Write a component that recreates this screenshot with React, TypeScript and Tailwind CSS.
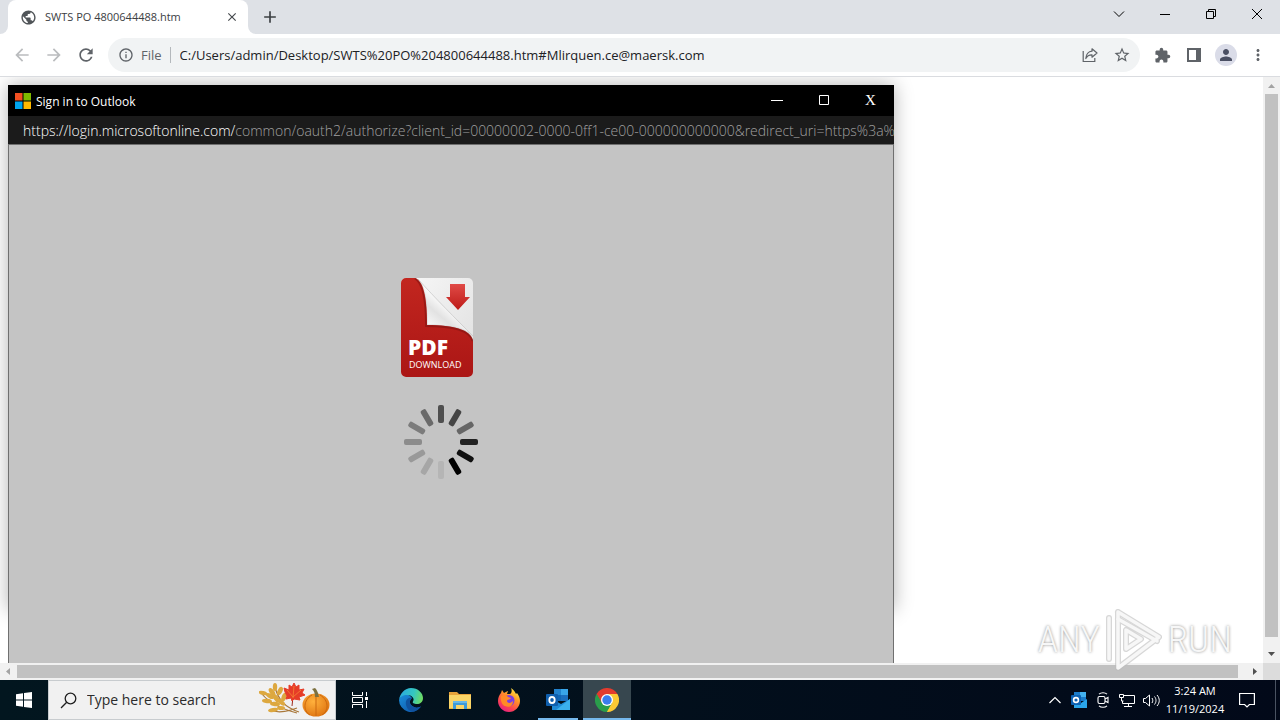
import type { ReactNode } from "react";
import {
  MdAdd,
  MdArrowBack,
  MdArrowForward,
  MdClose,
  MdExtension,
  MdInfoOutline,
  MdMoreVert,
  MdPerson,
  MdPublic,
  MdRefresh,
  MdStarBorder,
} from "react-icons/md";

function WindowButton({ label, children }: { label: string; children: ReactNode }) {
  return (
    <button aria-label={label} className="flex h-7 w-[46px] items-center justify-center text-black">
      {children}
    </button>
  );
}

function TabStrip() {
  return (
    <div className="flex h-[34px] flex-none bg-[#dee1e6]">
      <div className="flex w-2 items-end bg-white">
        <div className="h-full w-2 rounded-br-lg bg-[#dee1e6]" />
      </div>
      <div className="flex w-60 items-center rounded-t-lg bg-white pr-2 pl-3">
        <MdPublic className="size-[17px] flex-none text-[#505458]" />
        <span className="ml-2 flex-1 text-[11px] whitespace-nowrap text-[#3c4043]">SWTS PO 4800644488.htm</span>
        <button aria-label="Close tab" className="flex size-4 items-center justify-center text-[#45494d]">
          <MdClose className="size-[14px]" />
        </button>
      </div>
      <div className="flex w-2 items-end bg-white">
        <div className="h-full w-2 rounded-bl-lg bg-[#dee1e6]" />
      </div>
      <button aria-label="New tab" className="flex w-7 items-center justify-center text-[#3c4043]">
        <MdAdd className="size-5" />
      </button>
      <div className="ml-auto flex">
        <WindowButton label="Search tabs">
          <svg className="size-3" viewBox="0 0 12 12" fill="none" stroke="currentColor">
            <path d="M1 3.5l5 5 5-5" />
          </svg>
        </WindowButton>
        <WindowButton label="Minimize">
          <svg className="size-3" viewBox="0 0 12 12" stroke="currentColor">
            <path d="M1 6.5h10" />
          </svg>
        </WindowButton>
        <WindowButton label="Restore">
          <svg className="size-3" viewBox="0 0 12 12" fill="none" stroke="currentColor">
            <path d="M1.5 3.5h7v7h-7zM3.5 3.5v-2h7v7h-2" />
          </svg>
        </WindowButton>
        <WindowButton label="Close">
          <svg className="size-3" viewBox="0 0 12 12" fill="none" stroke="currentColor">
            <path d="M1 1l10 10M11 1L1 11" />
          </svg>
        </WindowButton>
      </div>
    </div>
  );
}

function ToolButton({ label, children }: { label: string; children: ReactNode }) {
  return (
    <button aria-label={label} className="flex size-8 flex-none items-center justify-center text-[#5f6368]">
      {children}
    </button>
  );
}

function Toolbar() {
  return (
    <div className="flex h-[43px] flex-none items-center border-b border-[#dadce0] bg-white px-[6px]">
      <ToolButton label="Back">
        <MdArrowBack className="size-5 text-[#babcbe]" />
      </ToolButton>
      <ToolButton label="Forward">
        <MdArrowForward className="size-5 text-[#babcbe]" />
      </ToolButton>
      <ToolButton label="Reload">
        <MdRefresh className="size-5" />
      </ToolButton>
      <div className="ml-[6px] flex h-[34px] flex-1 items-center rounded-full bg-[#f1f3f4] pr-[2px] pl-[10px]">
        <MdInfoOutline className="size-4 flex-none text-[#5f6368]" />
        <label htmlFor="address" className="ml-[7px] text-[13px] leading-5 text-[#5f6368]">
          File
        </label>
        <div className="ml-2 h-4 w-px flex-none bg-[#b4b8bc]" />
        <input
          id="address"
          className="ml-[9px] min-w-0 flex-1 bg-transparent text-[13px] leading-5 text-[#202124] outline-none"
          defaultValue="C:/Users/admin/Desktop/SWTS%20PO%204800644488.htm#Mlirquen.ce@maersk.com"
        />
        <ToolButton label="Share this page">
          <svg className="size-4" viewBox="0 0 16 16" fill="none" stroke="currentColor" strokeWidth="1.2">
            <path d="M1.2 4v10.5h11.6V11" />
            <path d="M10 1.8l5 4.2-5 4.2V7.8C7 7.700 5 9 3.800 11.500 4 7.500 6.500 4.500 10 4.200z" strokeLinejoin="round" />
          </svg>
        </ToolButton>
        <ToolButton label="Bookmark this tab">
          <MdStarBorder className="size-[18px]" />
        </ToolButton>
      </div>
      <div className="ml-[6px] flex">
        <ToolButton label="Extensions">
          <MdExtension className="size-[17px]" />
        </ToolButton>
        <ToolButton label="Side panel">
          <svg className="size-[14px]" viewBox="0 0 14 14">
            <path fill="currentColor" fillRule="evenodd" d="M0 0h14v14H0zM2 2v10h7V2z" />
          </svg>
        </ToolButton>
        <ToolButton label="Profile">
          <span className="flex size-[22px] items-center justify-center rounded-full bg-[#dadce8]">
            <MdPerson className="size-[18px] text-[#4a4f63]" />
          </span>
        </ToolButton>
        <ToolButton label="Menu">
          <MdMoreVert className="size-[18px]" />
        </ToolButton>
      </div>
    </div>
  );
}

function PdfIcon() {
  return (
    <svg className="h-[99px] w-[72px] flex-none" viewBox="0 0 72 99" role="img" aria-label="PDF download">
      <defs>
        <linearGradient id="pdfRed" x1="0" y1="0" x2="0" y2="1">
          <stop offset="0" stopColor="#c2261f" />
          <stop offset="1" stopColor="#ab1615" />
        </linearGradient>
        <linearGradient id="pdfSheet" x1="0" y1="0" x2="1" y2="1">
          <stop offset="0" stopColor="#f8f8f8" />
          <stop offset="1" stopColor="#dedede" />
        </linearGradient>
        <linearGradient id="pdfCurl" x1="0.150" y1="0.900" x2="0.600" y2="0.350">
          <stop offset="0" stopColor="#ffffff" />
          <stop offset="0.500" stopColor="#e2e2e2" />
          <stop offset="0.800" stopColor="#fafafa" />
          <stop offset="1" stopColor="#b4b4b4" />
        </linearGradient>
        <linearGradient id="pdfArrow" x1="0" y1="0" x2="0" y2="1">
          <stop offset="0" stopColor="#e04a46" />
          <stop offset="1" stopColor="#bd1b18" />
        </linearGradient>
      </defs>
      <rect width="72" height="99" rx="5" fill="url(#pdfSheet)" />
      <path d="M17 1c7 8 9 22 9 46 22 0 38 3 46 11C56 42 33 19 17 1z" fill="url(#pdfCurl)" stroke="#c9c9c9" strokeWidth="0.800" />
      <path d="M0 5a5 5 0 0 1 5-5h9c8 3 12 17 12 47 28 0 44 5 46 16v31a5 5 0 0 1-5 5H5a5 5 0 0 1-5-5z" fill="url(#pdfRed)" />
      <path d="M14 .5c7 4 11 18 11 47.500 27 0 44 5 46.500 15" fill="none" stroke="#861512" strokeWidth="1.800" opacity="0.650" />
      <path d="M49 6h15v13h5L57 32 45 19h4z" fill="url(#pdfArrow)" />
      <text x="7" y="77" fontFamily="Open Sans, sans-serif" fontWeight="800" fontSize="21" fill="white">
        PDF
      </text>
      <text x="8" y="90" fontFamily="Open Sans, sans-serif" fontSize="9" fill="white">
        DOWNLOAD
      </text>
    </svg>
  );
}

const SPOKES = [
  "#4f4f4f", "#454545", "#666666", "#222222", "#101010", "#000000",
  "#b5b5b5", "#a6a6a6", "#999999", "#8c8c8c", "#7c7c7c", "#6a6a6a",
];

function Spinner() {
  return (
    <svg className="size-20 flex-none" viewBox="-40 -40 80 80" role="img" aria-label="Loading">
      {SPOKES.map((color, i) => (
        <rect key={i} x="-3" y="-37" width="6" height="18" rx="2" fill={color} transform={`rotate(${i * 30})`} />
      ))}
    </svg>
  );
}

function SignInWindow() {
  return (
    <section className="ml-2 h-[525px] w-[886px] flex-none shadow-[0_0_18px_rgba(0,0,0,0.3)]">
      <header className="flex h-[31px] items-center bg-black pl-[7px] text-white">
        <svg className="size-4" viewBox="0 0 16 16">
          <path fill="#f25022" d="M0 0h7.500v7.500H0z" />
          <path fill="#7fba00" d="M8.500 0H16v7.500H8.500z" />
          <path fill="#00a4ef" d="M0 8.500h7.500V16H0z" />
          <path fill="#ffb900" d="M8.500 8.500H16V16H8.500z" />
        </svg>
        <h1 className="ml-[5px] pt-[3px] text-xs leading-5">Sign in to Outlook</h1>
        <div className="ml-auto flex self-start">
          <button aria-label="Minimize window" className="flex h-[30px] w-[47px] items-center justify-center">
            <svg className="size-3" viewBox="0 0 12 12" stroke="white">
              <path d="M0 6.500h12" />
            </svg>
          </button>
          <button aria-label="Maximize window" className="flex h-[30px] w-[47px] items-center justify-center">
            <svg className="size-3" viewBox="0 0 12 12" stroke="white" fill="none">
              <path d="M1.500 1.500h9v9h-9z" />
            </svg>
          </button>
          <button
            aria-label="Close window"
            className="h-[30px] w-[47px] font-['Liberation_Serif',serif] text-[15px] leading-[30px]"
          >
            X
          </button>
        </div>
      </header>
      <div className="h-7 overflow-hidden bg-[#1b1b1b] pl-[15px] text-sm leading-[30px] font-light whitespace-nowrap text-[#a0a0a0]">
        <span className="text-white">https://login.microsoftonline.com/</span>
        common/oauth2/authorize?client_id=00000002-0000-0ff1-ce00-000000000000&amp;redirect_uri=https%3a%2f%2foutlook.office.com
      </div>
      <div className="flex h-[600px] flex-col gap-[25px] border border-[#707070] bg-[#c4c4c4] pt-[133px] pl-[392px]">
        <PdfIcon />
        <Spinner />
      </div>
    </section>
  );
}

function Watermark() {
  return (
    <div className="absolute right-12 bottom-12 flex items-center gap-1 font-['Roboto_Condensed','Liberation_Sans',sans-serif] text-[37px] leading-[64px] font-light text-[#f7f7f7] [text-shadow:0_0_3px_#888]">
      <span>ANY</span>
      <svg className="h-16 w-[60px]" viewBox="0 0 60 64" fill="none" strokeLinejoin="round" strokeLinecap="round">
        <g stroke="#bdbdbd" strokeWidth="6" opacity="0.600">
          <path d="M14 4l41 25-41 31V4" />
          <path d="M5 10v41M14 11l39 22M22 22v19l15-10z" />
        </g>
        <g stroke="#f7f7f7" strokeWidth="3.500">
          <path d="M14 4l41 25-41 31V4" />
          <path d="M5 10v41M14 11l39 22M22 22v19l15-10z" />
        </g>
      </svg>
      <span>RUN</span>
    </div>
  );
}

function Viewport() {
  return (
    <main className="flex min-h-0 flex-1 flex-col bg-white">
      <div className="flex min-h-0 flex-1">
        <div className="min-w-0 flex-1 overflow-hidden pt-2">
          <SignInWindow />
        </div>
        <div className="flex w-[17px] flex-col items-center bg-[#f1f1f1]">
          <svg className="size-[17px] flex-none" viewBox="0 0 17 17">
            <path d="M5 11l3.500-4 3.500 4z" fill="#a3a3a3" />
          </svg>
          <div className="w-[13px] flex-1 bg-[#c1c1c1]" />
          <div className="h-[9px]" />
          <svg className="size-[17px] flex-none" viewBox="0 0 17 17">
            <path d="M5 6l3.500 4L12 6z" fill="#505050" />
          </svg>
        </div>
      </div>
      <div className="flex h-[17px] flex-none items-center bg-[#f1f1f1]">
        <svg className="size-[17px]" viewBox="0 0 17 17">
          <path d="M10 5L6 8.500l4 3.500z" fill="#a3a3a3" />
        </svg>
        <div className="h-[13px] flex-1 bg-[#c1c1c1]" />
        <div className="w-2" />
        <svg className="size-[17px]" viewBox="0 0 17 17">
          <path d="M7 5l4 3.500L7 12z" fill="#505050" />
        </svg>
        <div className="h-full w-[17px] bg-[#dcdcdc]" />
      </div>
    </main>
  );
}

function HarvestArt() {
  return (
    <svg className="h-9 w-[72px] flex-none" viewBox="0 0 72 36">
      <defs>
        <radialGradient id="pumpkin" cx="0.400" cy="0.350" r="0.700">
          <stop offset="0" stopColor="#ffb13d" />
          <stop offset="1" stopColor="#df7410" />
        </radialGradient>
      </defs>
      <g stroke="#a9783a" strokeWidth="1.200" fill="none">
        <path d="M16 5c3 12 9 20 24 25M3 12c8 10 20 15 35 19M14 29c8 2 15 0 24-3" />
      </g>
      <g fill="#dda83f">
        <ellipse cx="16" cy="5" rx="2.200" ry="4" />
        <ellipse cx="13" cy="10" rx="2.400" ry="4.500" transform="rotate(-35 13 10)" />
        <ellipse cx="21" cy="9" rx="2.400" ry="4.500" transform="rotate(25 21 9)" />
        <ellipse cx="17" cy="16" rx="2.400" ry="4.500" transform="rotate(-35 17 16)" />
        <ellipse cx="25" cy="15" rx="2.400" ry="4.500" transform="rotate(20 25 15)" />
        <ellipse cx="4" cy="11" rx="4.500" ry="2" transform="rotate(15 4 11)" />
        <ellipse cx="11" cy="14" rx="4.500" ry="2.200" transform="rotate(30 11 14)" />
        <ellipse cx="8" cy="19" rx="5" ry="2.200" transform="rotate(5 8 19)" />
        <ellipse cx="16" cy="22" rx="5" ry="2.200" transform="rotate(5 16 22)" />
        <ellipse cx="22" cy="20" rx="5" ry="2.200" transform="rotate(40 22 20)" />
        <ellipse cx="14" cy="28" rx="5" ry="2" transform="rotate(-10 14 28)" />
        <ellipse cx="22" cy="26" rx="4" ry="2" />
      </g>
      <path d="M34 15l-1 9" stroke="#9c2d20" strokeWidth="1" />
      <path
        d="M35 1l2 4 3-2v5l5-1-2 4 3 2-6 2 1 3-6-1-2 2-1-3-5 1 1-3-2-4-1-4 5 2V3l3 2z"
        fill="#e63c28"
        stroke="#e63c28"
        strokeWidth="1"
        strokeLinejoin="round"
      />
      <path d="M35 4l-1 12M42 8l-8 7M28 8l6 7" stroke="#f58434" strokeWidth="0.800" />
      <ellipse cx="57" cy="23" rx="13.500" ry="11.500" fill="url(#pumpkin)" />
      <g fill="none" stroke="#cc680e" strokeWidth="1">
        <path d="M53 13c-9 5-9 16-2 20M57 13v21M61 13c9 5 9 16 2 20" />
      </g>
      <path d="M56 15c0-4-1-6-3-8l3-1c2 2 3 4 4 9z" fill="#7d7140" />
    </svg>
  );
}

function EdgeIcon() {
  return (
    <svg className="size-6" viewBox="0 0 24 24">
      <defs>
        <linearGradient id="edgeTop" x1="0" y1="0.300" x2="1" y2="0.500">
          <stop offset="0" stopColor="#2aa9e0" />
          <stop offset="0.600" stopColor="#35c7c0" />
          <stop offset="1" stopColor="#6fdc62" />
        </linearGradient>
        <linearGradient id="edgeLow" x1="0" y1="0" x2="1" y2="1">
          <stop offset="0" stopColor="#1b8fdc" />
          <stop offset="1" stopColor="#0c4fa3" />
        </linearGradient>
      </defs>
      <path d="M0 12a12 12 0 0 0 22 6.500c-3 1.500-6 1.500-8 0-4-2.500-4-6-1-8.500C10 5 2 5 0 12z" fill="url(#edgeLow)" />
      <path d="M7 17c1 4 4 7 8 6.500A12 12 0 0 0 22 18.500c-3 1.500-6 1.500-8 0-4-2.500-4-6-1-8.500-4-1-7 2-6 7z" fill="#10529e" />
      <path d="M0 12C1 5 6 0 12 0c7 0 12 5 12 10 0 4-3 6-6 6s-5-1-4-2.500c2-3-1-6.500-6-6.500-4 0-7 2-8 5z" fill="url(#edgeTop)" />
    </svg>
  );
}

function FolderIcon() {
  return (
    <svg className="size-[22px]" viewBox="0 0 22 22">
      <path d="M0 3h8l2 2h12v4H0z" fill="#e8a33a" />
      <path d="M0 6h22v14H0z" fill="#fbd567" />
      <path d="M4 12h14v8h-3v-4H7v4H4z" fill="#3f9bd8" />
      <path d="M4 12h14v2H4z" fill="#67b8e8" />
      <path d="M0 19h4v1H0zM18 19h4v1h-4z" fill="#eab942" />
    </svg>
  );
}

function FirefoxIcon() {
  return (
    <svg className="size-6" viewBox="0 0 24 24">
      <defs>
        <linearGradient id="fox" x1="0.800" y1="0" x2="0.200" y2="1">
          <stop offset="0" stopColor="#fff04a" />
          <stop offset="0.350" stopColor="#ff9a26" />
          <stop offset="0.700" stopColor="#fb4550" />
          <stop offset="1" stopColor="#e51b88" />
        </linearGradient>
      </defs>
      <path
        d="M14 0c3 2 4 4 5 6l1-1c2 3 3 5 3 8 0 6-5 11-11 11S1 19 1 13c0-3 1-6 3-8l1-3 2 3c2-1 3-2 4-2l-1 3h3c2-1 2-4 1-6z"
        fill="url(#fox)"
      />
      <circle cx="12" cy="12.500" r="5.500" fill="#7b3fe4" />
      <path d="M4 8c3-2 6-1 7 1l3 1c-1 2-4 1-4 3s3 3 6 0c0 5-4 7-8 5C5 17 3 12 4 8z" fill="#ff8a26" />
    </svg>
  );
}

function OutlookIcon() {
  return (
    <svg className="h-[22px] w-6" viewBox="0 0 24 22">
      <path d="M8 0h14v12H8z" fill="#1066b5" />
      <path d="M8 0h7v6H8z" fill="#2283cf" />
      <path d="M15 0h7v6h-7z" fill="#39a5e9" />
      <path d="M15 6h7v6h-7z" fill="#1b6ebf" />
      <path d="M6 21h18V10l-9 5-9-5z" fill="#1f8ad6" />
      <path d="M24 10v11H10z" fill="#3bb0ee" />
      <rect y="5" width="12" height="12" rx="1" fill="#0f5fae" />
      <ellipse cx="6" cy="11" rx="2.700" ry="3" fill="none" stroke="white" strokeWidth="1.800" />
    </svg>
  );
}

function OutlookTrayIcon() {
  return (
    <svg className="size-4" viewBox="0 0 16 16">
      <path d="M3 0h12v9H3z" fill="#1b7cca" />
      <path d="M9 0h6v5H9z" fill="#43b2f0" />
      <path d="M3 16h13V7l-6 4-7-3z" fill="#2ba6ea" />
      <rect y="3" width="10" height="10" rx="1" fill="#0d62b3" />
      <circle cx="5" cy="8" r="2.400" fill="none" stroke="white" strokeWidth="1.600" />
    </svg>
  );
}

function ChromeIcon() {
  return (
    <svg className="size-6" viewBox="0 0 24 24">
      <path d="M12 12L1.600 6A12 12 0 0 1 22.400 6z" fill="#e33b2e" />
      <path d="M12 12l10.400-6A12 12 0 0 1 12 24z" fill="#fcc934" />
      <path d="M12 12v12A12 12 0 0 1 1.600 6z" fill="#2a9d4b" />
      <path d="M12 6h10.400l-5.200 9z" fill="#fcc934" />
      <path d="M17.200 15L12 24l-5.200-9z" fill="#2a9d4b" />
      <path d="M6.800 15L1.600 6 12 6z" fill="#e33b2e" />
      <path d="M6.800 15L1.600 6l2 9z" fill="#2a9d4b" />
      <path d="M17.200 15L12 24l8-4z" fill="#fcc934" />
      <circle cx="12" cy="12" r="6" fill="white" />
      <circle cx="12" cy="12" r="4.700" fill="#3b7ded" />
    </svg>
  );
}

function TrayButton({ label, children }: { label: string; children: ReactNode }) {
  return (
    <button aria-label={label} className="flex h-10 w-6 items-center justify-center">
      {children}
    </button>
  );
}

function Taskbar() {
  return (
    <footer className="flex h-10 flex-none bg-linear-to-r from-[#02161f] to-[#020919] text-white">
      <button aria-label="Start" className="flex w-12 items-center justify-center">
        <svg className="size-4" viewBox="0 0 16 16" fill="white">
          <path d="M0 2.200l7-1v6.300H0zM8 1.100L16 0v7.500H8zM0 8.500h7v6.300l-7-1zM8 8.500h8V16l-8-1.100z" />
        </svg>
      </button>
      <div className="flex w-72 items-center border border-[#c8cccf] bg-[#f1f1f1] pr-1 pl-[11px]">
        <svg className="size-[17px] flex-none" viewBox="0 0 17 17" fill="none" stroke="#1f1f1f" strokeWidth="1.300">
          <circle cx="10.500" cy="6.500" r="5.300" />
          <path d="M6.700 10.300L1 16" />
        </svg>
        <input
          aria-label="Search"
          placeholder="Type here to search"
          className="ml-[10px] min-w-0 flex-1 bg-transparent text-sm leading-5 outline-none placeholder:text-[#2b2b2b]"
        />
        <HarvestArt />
      </div>
      <button aria-label="Task view" className="mr-[3px] flex w-12 items-center justify-center">
        <svg className="size-4" viewBox="0 0 16 16" fill="none" stroke="white">
          <path d="M.5 0v3.500h10V0M.5 16v-3.500h10V16M.5 5.500h10v5H.5zM14.500 0v4M14.500 9v7" />
          <path d="M13 5h3v3h-3z" fill="white" stroke="none" />
        </svg>
      </button>
      <div className="flex gap-px">
        <button aria-label="Microsoft Edge" className="flex w-12 items-center justify-center">
          <EdgeIcon />
        </button>
        <button aria-label="File Explorer" className="flex w-12 items-center justify-center">
          <FolderIcon />
        </button>
        <button aria-label="Firefox" className="flex w-12 items-center justify-center">
          <FirefoxIcon />
        </button>
        <button aria-label="Outlook" className="flex w-12 flex-col items-center">
          <span className="flex flex-1 items-center pt-[2px]">
            <OutlookIcon />
          </span>
          <span className="h-[2px] w-10 bg-[#76b9ed]" />
        </button>
        <button aria-label="Google Chrome" className="flex w-12 flex-col items-center bg-[#37474f]">
          <span className="flex flex-1 items-center pt-[2px]">
            <ChromeIcon />
          </span>
          <span className="h-[2px] w-12 bg-[#76b9ed]" />
        </button>
      </div>
      <div className="ml-auto flex">
        <TrayButton label="Show hidden icons">
          <svg className="size-3" viewBox="0 0 12 12" fill="none" stroke="white" strokeWidth="1.200">
            <path d="M.5 9L6 3.500 11.500 9" />
          </svg>
        </TrayButton>
        <TrayButton label="Outlook notifications">
          <OutlookTrayIcon />
        </TrayButton>
        <TrayButton label="Meet now">
          <svg className="size-4" viewBox="0 0 16 16" fill="none" stroke="white" strokeWidth="1.100">
            <path d="M4 2.200c2-2 6-2 8 0M4 13.800c2 2 6 2 8 0" />
            <rect x="3" y="4.500" width="7" height="7" rx="1.500" />
            <path d="M10 7l3-1.500v5L10 9" />
          </svg>
        </TrayButton>
        <TrayButton label="Network">
          <svg className="size-4" viewBox="0 0 16 16" fill="none" stroke="white">
            <path d="M5 3.500h10.500v8h-12V9M9.500 11.500v3M5 14.500h8M.5 2.500h4v3h-4zM2.500 5.500v3.500h2" />
          </svg>
        </TrayButton>
        <TrayButton label="Volume">
          <svg className="size-[17px]" viewBox="0 0 17 17" fill="none" stroke="white">
            <path d="M.5 6.500h2l4-3.500v11l-4-3.500h-2zM9 6c1 1.500 1 3.500 0 5M11.500 4.500c2 2.500 2 5.500 0 8M14 3c3 3.500 3 7.500 0 11" />
          </svg>
        </TrayButton>
        <button className="flex w-16 flex-col items-center justify-center text-[11px] leading-[18px]">
          <span>3:24 AM</span>
          <span>11/19/2024</span>
        </button>
        <button aria-label="Notifications" className="flex w-10 items-center justify-center">
          <svg className="size-4" viewBox="0 0 16 16" fill="none" stroke="white" strokeWidth="1.200">
            <path d="M.6 1.500h14.800v11h-5L8 15l-2.400-2.500h-5z" />
          </svg>
        </button>
        <button aria-label="Show desktop" className="ml-2 w-[5px] border-l border-[#4a5362]" />
      </div>
    </footer>
  );
}

export default function App() {
  return (
    <div className="relative flex h-screen flex-col overflow-hidden font-['Open_Sans','Noto_Sans',sans-serif]">
      <TabStrip />
      <Toolbar />
      <Viewport />
      <Watermark />
      <Taskbar />
    </div>
  );
}
